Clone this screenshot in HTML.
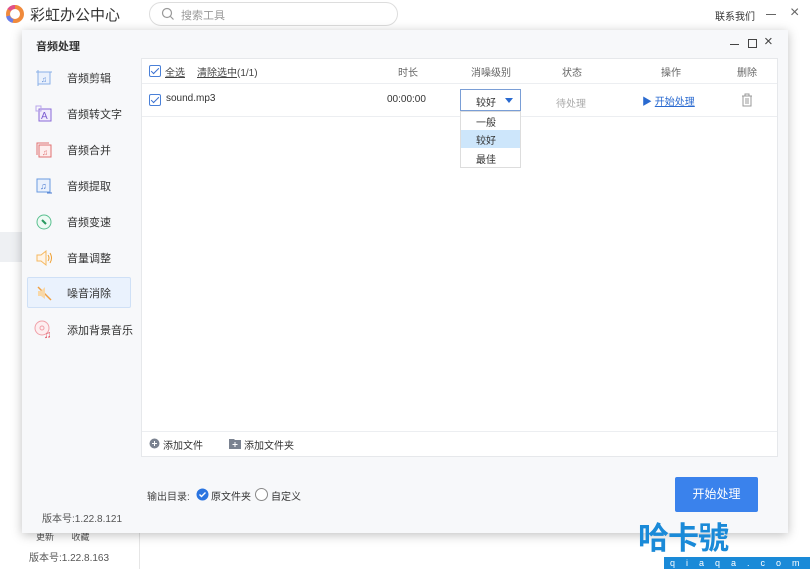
<!DOCTYPE html>
<html><head><meta charset="utf-8"><style>
*{margin:0;padding:0;box-sizing:border-box}
body{width:810px;height:569px;overflow:hidden;background:#fff;font-family:"Liberation Sans","Noto Sans CJK SC",sans-serif;font-size:11px;color:#333;position:relative}
.a{position:absolute}
.dlg{left:22px;top:30px;width:766px;height:503px;background:#f7f8fa;box-shadow:0 2px 10px rgba(0,0,0,.25)}
.nav{left:5px;width:104px;height:31px;display:flex;align-items:center;font-size:11px;color:#333;white-space:nowrap}
.nav .ic{width:20px;height:20px;margin-left:7px;margin-right:13px;display:flex;align-items:center;justify-content:center}
.panel{left:119px;top:28px;width:637px;height:399px;background:#fff;border:1px solid #e6e8eb}
.cb{width:12px;height:12px;border:1px solid #4a80d8;border-radius:2px;display:block;background:#fff}
.cb:after{content:"";position:absolute;left:3px;top:0px;width:3px;height:7px;border:solid #3a70d0;border-width:0 1.5px 1.5px 0;transform:rotate(45deg)}
.hd{color:#666;font-size:10px}
</style></head><body>
<svg class="a" style="left:5px;top:4px" width="20" height="20" viewBox="0 0 20 20"><circle cx="10" cy="10" r="7" fill="none" stroke="#f08a3c" stroke-width="4"/><path d="M4 6 A7 7 0 0 1 10 3" stroke="#e0508a" stroke-width="4" fill="none"/><path d="M3 12 A7 7 0 0 0 8 17" stroke="#6a7ee8" stroke-width="4" fill="none"/></svg>
<div class="a" style="left:30px;top:4px;font-size:15px;color:#333">彩虹办公中心</div>
<div class="a" style="left:149px;top:2px;width:249px;height:24px;border:1px solid #ddd;border-radius:12px"></div>
<svg class="a" style="left:161px;top:7px" width="14" height="14"><circle cx="6" cy="6" r="4.5" fill="none" stroke="#999" stroke-width="1.2"/><line x1="9.5" y1="9.5" x2="12.5" y2="12.5" stroke="#999" stroke-width="1.2"/></svg>
<div class="a" style="left:181px;top:7px;color:#999;font-size:11px">搜索工具</div>
<div class="a" style="left:715px;top:8px;font-size:10px;color:#333">联系我们</div>
<div class="a" style="left:766px;top:14px;width:10px;height:1px;background:#666"></div>
<div class="a" style="left:790px;top:4px;font-size:16px;color:#666">×</div>
<div class="a" style="left:0;top:232px;width:22px;height:30px;background:#eef0f3"></div>
<div class="a" style="left:139px;top:533px;width:1px;height:36px;background:#e6e6e6"></div>
<div class="a" style="left:36px;top:530px;font-size:9px;color:#555">更新&nbsp;&nbsp;&nbsp;&nbsp;&nbsp;&nbsp;&nbsp;收藏</div>
<div class="a" style="left:29px;top:549px;font-size:10px;color:#555">版本号:1.22.8.163</div>

<div class="a dlg">
 <div class="a" style="left:14px;top:8px;font-size:11px;font-weight:bold;color:#333">音频处理</div>
 <div class="a" style="left:708px;top:14px;width:9px;height:1px;background:#444"></div>
 <div class="a" style="left:726px;top:9px;width:9px;height:9px;border:1px solid #444"></div>
 <div class="a" style="left:742px;top:3px;font-size:15px;color:#444">×</div>

 <div class="a nav" style="top:32px"><div class="ic"><svg width="18" height="18"><rect x="3" y="3" width="12" height="12" fill="#eaf1fc" stroke="#8ab0e8"/><line x1="1" y1="3" x2="17" y2="3" stroke="#8ab0e8"/><line x1="3" y1="1" x2="3" y2="17" stroke="#8ab0e8"/><text x="6" y="13" font-size="8" fill="#5a8ad8">♫</text></svg></div>音频剪辑</div>
 <div class="a nav" style="top:68px"><div class="ic"><svg width="18" height="18"><rect x="4" y="4" width="12" height="12" fill="#f1ecfc" stroke="#8a6ad8"/><text x="6" y="14" font-size="10" fill="#7a5ad0">A</text><rect x="1" y="1" width="5" height="5" fill="none" stroke="#b9a6ec"/></svg></div>音频转文字</div>
 <div class="a nav" style="top:104px"><div class="ic"><svg width="18" height="18"><rect x="4" y="4" width="12" height="12" fill="#fdeeee" stroke="#e07070"/><path d="M2 14V2h12" fill="none" stroke="#e07070"/><text x="7" y="14" font-size="8" fill="#e07070">♫</text></svg></div>音频合并</div>
 <div class="a nav" style="top:140px"><div class="ic"><svg width="18" height="18"><rect x="2" y="2" width="13" height="13" fill="#eaf1fc" stroke="#6a9ae0"/><text x="5" y="12" font-size="9" fill="#4a7ad0">♫</text><path d="M12 16h5" stroke="#4a7ad0"/></svg></div>音频提取</div>
 <div class="a nav" style="top:176px"><div class="ic"><svg width="18" height="18"><circle cx="9" cy="9" r="7" fill="#eefaf4" stroke="#5ac090"/><path d="M7 7l4 4" stroke="#2a9a60" stroke-width="2"/></svg></div>音频变速</div>
 <div class="a nav" style="top:212px"><div class="ic"><svg width="18" height="18"><path d="M2 6h4l5-4v14l-5-4H2z" fill="#fff4e6" stroke="#f5b860"/><path d="M13 6q2 3 0 6M15 4q3 5 0 10" fill="none" stroke="#f0a030"/></svg></div>音量调整</div>
 <div class="a nav" style="top:247px;background:#eaf2fd;border:1px solid #cfe0f6;border-radius:2px"><div class="ic" style="margin-left:6px"><svg width="18" height="18"><path d="M3 3l13 13" stroke="#f0a040" stroke-width="1.5"/><path d="M3 7h3l4-4v12l-4-3H3z" fill="#f8d8a8"/></svg></div>噪音消除</div>
 <div class="a nav" style="top:284px"><div class="ic"><svg width="20" height="20"><circle cx="8" cy="8" r="7" fill="#fdeef0" stroke="#f0a0a8"/><circle cx="8" cy="8" r="2" fill="none" stroke="#f0a0a8"/><text x="10" y="18" font-size="10" fill="#e04050">♫</text></svg></div>添加背景音乐</div>
 <div class="a" style="left:20px;top:480px;font-size:10px;color:#555">版本号:1.22.8.121</div>

 <div class="a panel">
  <div class="a" style="left:0;top:0;width:635px;height:25px;border-bottom:1px solid #eceef1"></div>
  <span class="a cb" style="left:7px;top:6px"></span>
  <div class="a" style="left:23px;top:5px;font-size:10px;text-decoration:underline;color:#444">全选</div>
  <div class="a" style="left:55px;top:5px;font-size:10px;color:#444"><u>清除选中</u>(1/1)</div>
  <div class="a hd" style="left:256px;top:5px">时长</div>
  <div class="a hd" style="left:329px;top:5px">消噪级别</div>
  <div class="a hd" style="left:420px;top:5px">状态</div>
  <div class="a hd" style="left:519px;top:5px">操作</div>
  <div class="a hd" style="left:595px;top:5px">删除</div>
  <div class="a" style="left:0;top:57px;width:635px;height:1px;background:#eceef1"></div>
  <span class="a cb" style="left:7px;top:35px"></span>
  <div class="a" style="left:24px;top:34px;font-size:10px">sound.mp3</div>
  <div class="a" style="left:245px;top:35px;font-size:10px">00:00:00</div>
  <div class="a" style="left:318px;top:30px;width:61px;height:22px;border:1px solid #7a9ed6;background:#fff"></div>
  <div class="a" style="left:334px;top:35px;font-size:10px">较好</div>
  <div class="a" style="left:363px;top:39px;width:0;height:0;border-left:4px solid transparent;border-right:4px solid transparent;border-top:5px solid #2a6ad0"></div>
  <div class="a" style="left:318px;top:52px;width:61px;height:57px;border:1px solid #ddd;background:#fff"></div>
  <div class="a" style="left:319px;top:71px;width:59px;height:18px;background:#cde6fb"></div>
  <div class="a" style="left:334px;top:55px;font-size:10px">一般</div>
  <div class="a" style="left:334px;top:73px;font-size:10px">较好</div>
  <div class="a" style="left:334px;top:92px;font-size:10px">最佳</div>
  <div class="a" style="left:414px;top:36px;font-size:10px;color:#aaa">待处理</div>
  <div class="a" style="left:500px;top:34px;font-size:10px;color:#2a6ad0">▶ <u>开始处理</u></div>
  <svg class="a" style="left:598px;top:34px" width="14" height="14"><path d="M2 3h10M5 3V1h4v2M3 3v10h8V3M6 5v6M8 5v6" fill="none" stroke="#999"/></svg>
  <div class="a" style="left:0;top:372px;width:635px;height:1px;background:#eceef1"></div>
  <svg class="a" style="left:7px;top:379px" width="11" height="11"><circle cx="5.5" cy="5.5" r="5" fill="#7a8290"/><path d="M5.5 3v5M3 5.5h5" stroke="#fff"/></svg>
  <div class="a" style="left:21px;top:378px;font-size:10px">添加文件</div>
  <svg class="a" style="left:87px;top:379px" width="12" height="11"><path d="M0 1h5l1 1h6v9H0z" fill="#7a8290"/><path d="M6 4v5M3.5 6.5h5" stroke="#fff"/></svg>
  <div class="a" style="left:102px;top:378px;font-size:10px">添加文件夹</div>
 </div>
 <div class="a" style="left:125px;top:458px;font-size:10px;color:#444">输出目录:</div>
 <svg class="a" style="left:174px;top:458px" width="13" height="13"><circle cx="6.5" cy="6.5" r="6" fill="#2a74e0"/><path d="M3.5 6.5l2 2 4-4" fill="none" stroke="#fff" stroke-width="1.4"/></svg>
 <div class="a" style="left:189px;top:458px;font-size:10px">原文件夹</div>
 <div class="a" style="left:233px;top:458px;width:13px;height:13px;border:1px solid #888;border-radius:50%;background:#fff"></div>
 <div class="a" style="left:249px;top:458px;font-size:10px">自定义</div>
 <div class="a" style="left:653px;top:447px;width:83px;height:35px;background:#3a82ec;border-radius:2px;color:#fff;font-size:12px;text-align:center;line-height:35px">开始处理</div>
</div>
<div class="a" style="left:638px;top:522px;font-size:31px;color:#1a8ad8;font-weight:bold;letter-spacing:-1px;line-height:34px;z-index:5">哈卡號</div>
<div class="a" style="left:664px;top:557px;width:146px;height:12px;background:#1a8ad8;color:#fff;font-size:9px;letter-spacing:11px;padding-left:6px;line-height:12px;z-index:5">qiaqa.com</div>
</body></html>
